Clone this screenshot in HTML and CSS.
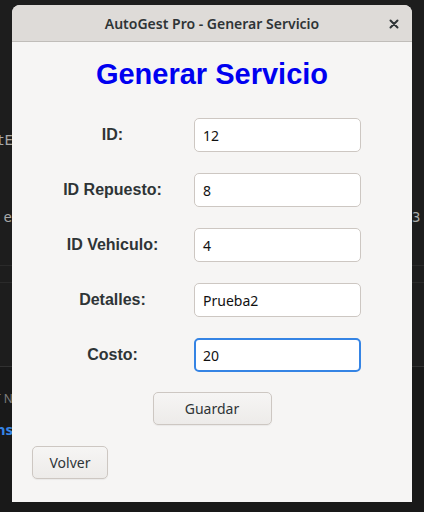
FILE: index.html
```html
<!DOCTYPE html>
<html lang="es">
<head>
<meta charset="utf-8">
<title>AutoGest Pro - Generar Servicio</title>
<link rel="stylesheet" href="styles.css">
</head>
<body>
<div class="desktop">
  <div class="backdrop">
    <div class="bg-row row-a"><span class="bg-left mono">setE</span><span class="bg-right mono"></span></div>
    <div class="bg-row row-b"><span class="bg-left mono">e</span><span class="bg-right mono">3</span></div>
    <div class="bg-line line-1"></div>
    <div class="bg-line line-2"></div>
    <div class="bg-lower">
      <div class="bg-row row-c"><span class="bg-left small">T N</span></div>
      <div class="bg-row row-d"><span class="bg-left link">ns</span></div>
    </div>
  </div>

  <div class="window">
    <div class="titlebar">
      <span class="title">AutoGest Pro - Generar Servicio</span>
      <button class="close" aria-label="Cerrar">
        <svg width="10" height="10" viewBox="0 0 10 10"><path d="M1.5 1.5 L8.5 8.5 M8.5 1.5 L1.5 8.5" stroke="#2e3436" stroke-width="2" stroke-linecap="round"/></svg>
      </button>
    </div>
    <div class="content">
      <h1 class="heading">Generar Servicio</h1>
      <div class="form">
        <label class="label">ID:</label>
        <div class="entry">12</div>
        <label class="label">ID Repuesto:</label>
        <div class="entry">8</div>
        <label class="label">ID Vehiculo:</label>
        <div class="entry">4</div>
        <label class="label">Detalles:</label>
        <div class="entry">Prueba2</div>
        <label class="label">Costo:</label>
        <div class="entry focused">20</div>
      </div>
      <div class="actions">
        <button class="btn btn-save">Guardar</button>
      </div>
      <div class="footer">
        <button class="btn btn-back">Volver</button>
      </div>
    </div>
  </div>
</div>
</body>
</html>
```

FILE: styles.css
```css
html, body {
  margin: 0;
  padding: 0;
  background: #1d1d1d;
}

.desktop {
  position: relative;
  width: 424px;
  height: 512px;
  overflow: hidden;
  background: #1d1d1d;
  font-family: "Noto Sans", sans-serif;
}

.backdrop {
  display: flex;
  flex-direction: column;
  height: 100%;
  padding-top: 132px;
  box-sizing: border-box;
}

.bg-row {
  display: flex;
  justify-content: space-between;
  height: 16px;
  line-height: 16px;
}

.bg-left {
  width: 13px;
  overflow: hidden;
  direction: rtl;
  white-space: nowrap;
  color: #a8a8a8;
}

.bg-right {
  width: 12px;
  overflow: hidden;
  white-space: nowrap;
  color: #a8a8a8;
}

.mono {
  font-family: "DejaVu Sans Mono", monospace;
  font-size: 14px;
}

.row-b {
  margin-top: 61px;
}

.row-b .bg-left {
  width: 12px;
}

.bg-line {
  height: 1px;
  background: #2a2a2a;
}

.line-1 {
  margin-top: 40px;
}

.line-2 {
  margin-top: 16px;
}

.bg-lower {
  margin-top: 83px;
  border-top: 1px solid #313131;
  flex: 1;
  background: #191919;
}

.small {
  font-size: 12px;
  color: #7d7d7d;
}

.row-c {
  margin-top: 24px;
}

.link {
  font-weight: 700;
  font-size: 15px;
  color: #3584e4;
}

.row-d {
  margin-top: 14px;
}

/* Window */
.window {
  position: absolute;
  left: 12px;
  top: 5px;
  width: 400px;
  height: 497px;
  background: #f6f5f4;
  border-radius: 8px 8px 0 0;
  overflow: hidden;
  display: flex;
  flex-direction: column;
}

.titlebar {
  height: 36px;
  flex: none;
  background: #dedbd8;
  border-bottom: 1px solid #c0bdb9;
  display: flex;
  align-items: center;
  justify-content: center;
  position: relative;
}

.title {
  font-family: "Noto Sans", sans-serif;
  font-weight: 600;
  font-size: 14px;
  color: #2e3436;
}

.close {
  position: absolute;
  right: 12px;
  top: 13px;
  width: 12px;
  height: 12px;
  padding: 0;
  border: 0;
  background: none;
  display: flex;
  align-items: center;
  justify-content: center;
}

.content {
  flex: 1;
  display: flex;
  flex-direction: column;
}

.heading {
  margin: 15px 0 0;
  text-align: center;
  font-family: "Liberation Sans", Arial, sans-serif;
  font-weight: 700;
  font-size: 29px;
  line-height: 34px;
  color: #0000f0;
}

.form {
  margin-top: 27px;
  margin-left: 38px;
  display: grid;
  grid-template-columns: 125px 167px;
  column-gap: 19px;
  row-gap: 21px;
  align-items: center;
}

.label {
  text-align: center;
  white-space: nowrap;
  font-family: "Liberation Sans", Arial, sans-serif;
  font-weight: 700;
  font-size: 16px;
  color: #2e3436;
}

.entry {
  height: 34px;
  box-sizing: border-box;
  border: 1px solid #cdc7c2;
  border-radius: 5px;
  background: #ffffff;
  padding: 0 8px;
  display: flex;
  align-items: center;
  font-size: 14px;
  color: #111;
}

.entry.focused {
  border: 2px solid #3584e4;
  padding: 0 7px;
}

.actions {
  margin-top: 20px;
  display: flex;
  justify-content: center;
}

.btn {
  height: 33px;
  box-sizing: border-box;
  border: 1px solid #cdc7c2;
  border-radius: 5px;
  background: linear-gradient(#f6f5f4, #edebe9);
  box-shadow: 0 1px 1px rgba(0, 0, 0, 0.05);
  font-family: "Noto Sans", sans-serif;
  font-size: 14px;
  color: #2e3436;
  padding: 0;
}

.btn-save {
  width: 119px;
}

.footer {
  margin-top: 21px;
  padding-left: 20px;
}

.btn-back {
  width: 76px;
}
```
